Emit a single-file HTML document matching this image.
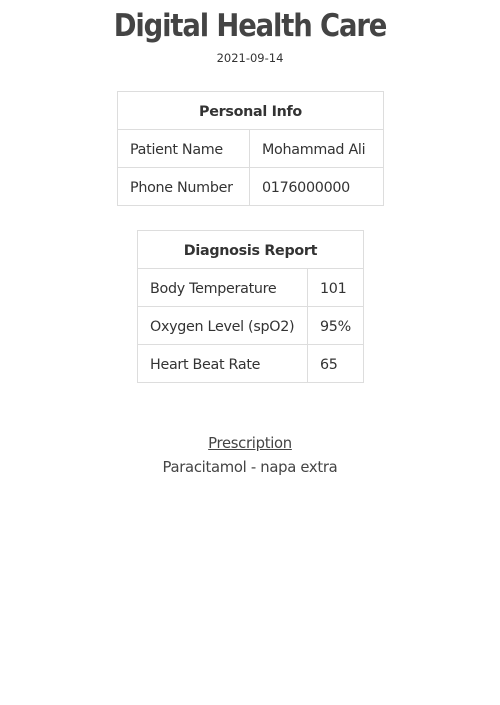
<!DOCTYPE html>
<html><head><meta charset="utf-8"><style>
body{margin:0;background:#fff;font-family:"DejaVu Sans","Liberation Sans",sans-serif;color:#333;width:500px;height:705px;overflow:hidden;}
h1{position:absolute;top:8px;left:0;width:500px;text-align:center;margin:0;font-size:31px;font-weight:bold;color:#444;letter-spacing:-1.3px;transform:scaleX(0.885);}
.date{position:absolute;top:51px;left:0;width:500px;text-align:center;font-size:11.5px;color:#333;}
table{position:absolute;border-collapse:collapse;font-size:14.3px;table-layout:fixed;}
td,th{border:1px solid #ddd;height:38px;padding:3px 0 0 12px;box-sizing:border-box;text-align:left;font-weight:normal;white-space:nowrap;overflow:hidden;letter-spacing:-0.3px;}
th{text-align:center;font-weight:bold;padding:3px 0 0 0;}
.p{position:absolute;left:0;width:500px;text-align:center;font-size:14.8px;color:#444;letter-spacing:-0.3px;}
</style></head><body>
<h1>Digital Health Care</h1>
<div class="date">2021-09-14</div>
<table style="left:117px;top:91px;width:266px">
<col style="width:132px"><col style="width:134px">
<tr><th colspan="2">Personal Info</th></tr>
<tr><td>Patient Name</td><td>Mohammad Ali</td></tr>
<tr><td>Phone Number</td><td>0176000000</td></tr>
</table>
<table style="left:137px;top:230px;width:226px">
<col style="width:170px"><col style="width:56px">
<tr><th colspan="2">Diagnosis Report</th></tr>
<tr><td>Body Temperature</td><td>101</td></tr>
<tr><td>Oxygen Level (spO2)</td><td>95%</td></tr>
<tr><td>Heart Beat Rate</td><td>65</td></tr>
</table>
<div class="p" style="top:435px;text-decoration:underline">Prescription</div>
<div class="p" style="top:459px">Paracitamol - napa extra</div>
</body></html>
